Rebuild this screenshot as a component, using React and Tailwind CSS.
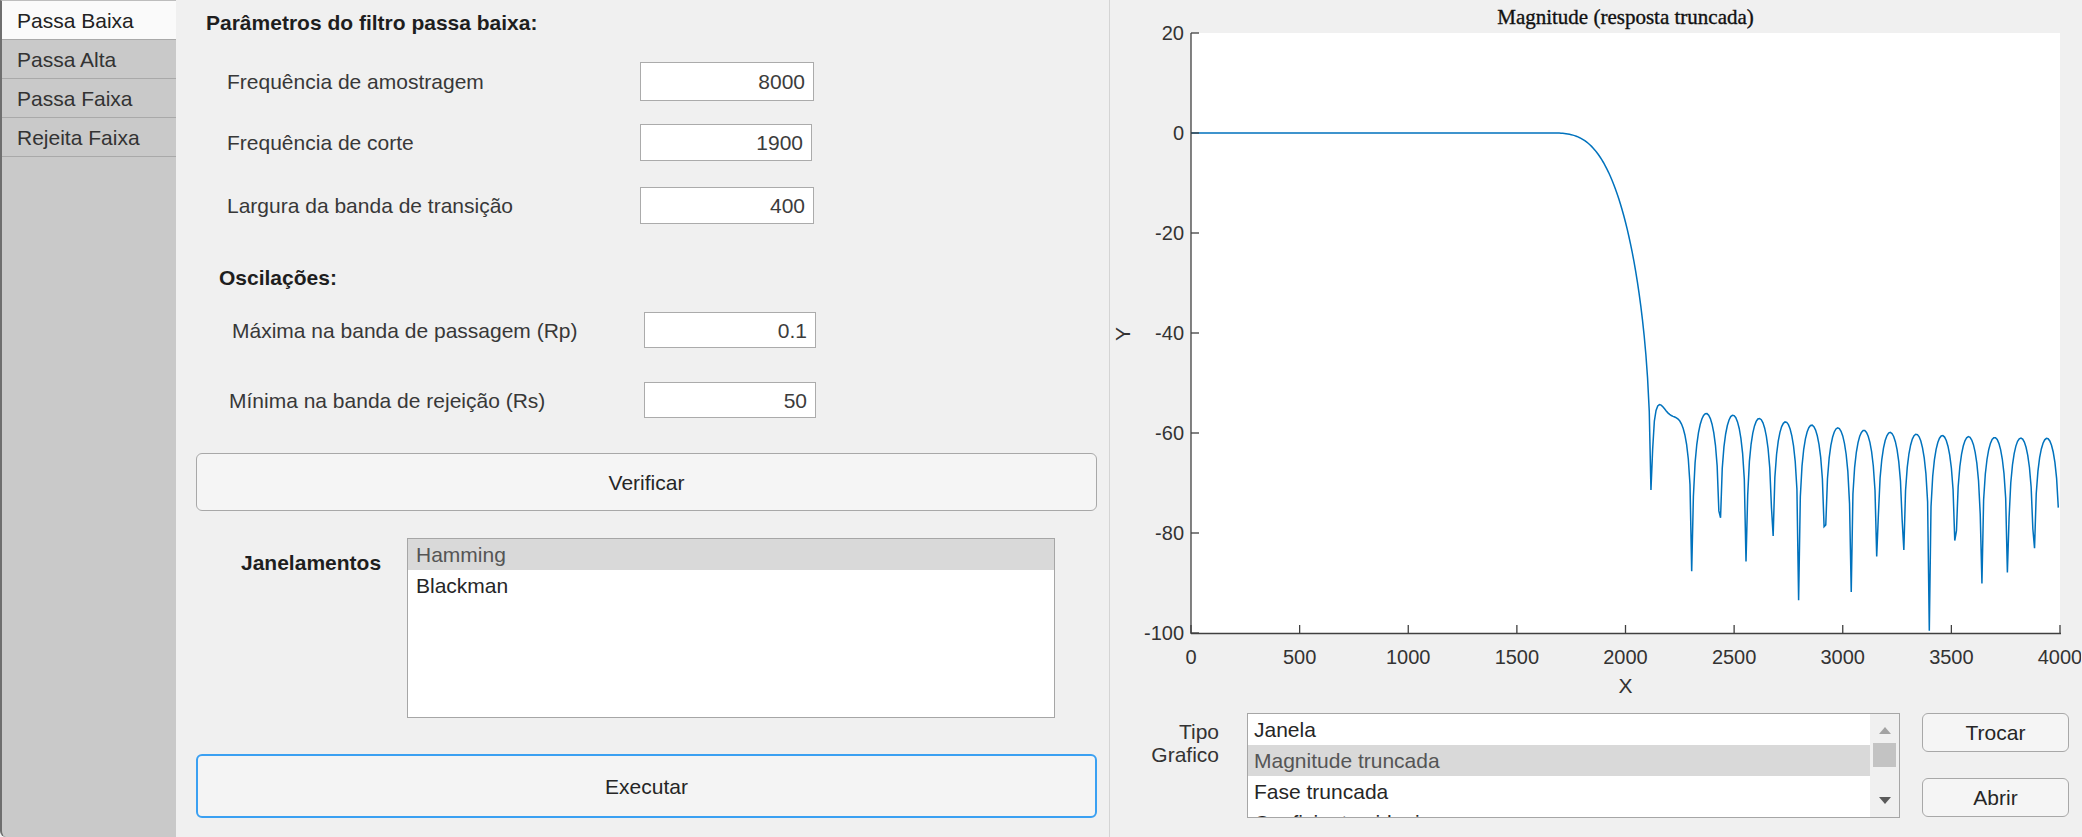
import React, { useMemo } from 'react';

// FIR passa baixa (janela de Hamming) para o gráfico de magnitude
function magnitudeResponse() {
  const fs = 8000;
  const fc = 1900;
  const N = 66;
  const M = N - 1;
  const wc = (2 * Math.PI * fc) / fs;
  const h = [];
  for (let n = 0; n < N; n++) {
    const k = n - M / 2;
    const ideal = k === 0 ? wc / Math.PI : Math.sin(wc * k) / (Math.PI * k);
    const w = 0.54 - 0.46 * Math.cos((2 * Math.PI * n) / M);
    h.push(ideal * w);
  }
  const pts = [];
  for (let i = 0; i < 512; i++) {
    const f = (i * fs) / 1024;
    const om = (2 * Math.PI * f) / fs;
    let re = 0;
    let im = 0;
    for (let n = 0; n < N; n++) {
      re += h[n] * Math.cos(om * n);
      im -= h[n] * Math.sin(om * n);
    }
    pts.push([f, 20 * Math.log10(Math.sqrt(re * re + im * im) + 1e-12)]);
  }
  return pts;
}

const AX = { left: 81, right: 950, top: 33, bottom: 633 };
const xPos = (f) => AX.left + (f / 4000) * (AX.right - AX.left);
const yPos = (db) => AX.top + (20 - db) * 5;

const MagnitudePlot = () => {
  const path = useMemo(() => {
    const pts = magnitudeResponse();
    return pts
      .map(([f, db], i) => `${i === 0 ? 'M' : 'L'}${xPos(f).toFixed(2)},${yPos(Math.max(db, -140)).toFixed(2)}`)
      .join(' ');
  }, []);

  const xTicks = [0, 500, 1000, 1500, 2000, 2500, 3000, 3500, 4000];
  const yTicks = [20, 0, -20, -40, -60, -80, -100];

  return (
    <svg width="971" height="700" className="block">
      <defs>
        <clipPath id="plotClip">
          <rect x={AX.left} y={AX.top} width={AX.right - AX.left} height={AX.bottom - AX.top} />
        </clipPath>
      </defs>
      <text
        x={(AX.left + AX.right) / 2}
        y="24"
        textAnchor="middle"
        fontFamily="'Liberation Serif', 'Times New Roman', serif"
        fontSize="21"
        fill="#111111"
        stroke="#111111"
        strokeWidth="0.35"
      >
        Magnitude (resposta truncada)
      </text>
      <rect x={AX.left} y={AX.top} width={AX.right - AX.left} height={AX.bottom - AX.top + 1} fill="#ffffff" />
      <path d={path} fill="none" stroke="#0072bd" strokeWidth="1.5" clipPath="url(#plotClip)" />
      <g stroke="#404040" strokeWidth="1.3" fill="none">
        <line x1={AX.left} y1={AX.top} x2={AX.left} y2={AX.bottom + 1} />
        <line x1={AX.left} y1={AX.bottom + 0.5} x2={AX.right + 1} y2={AX.bottom + 0.5} />
        {xTicks.map((t) => (
          <line key={t} x1={xPos(t)} y1={AX.bottom} x2={xPos(t)} y2={AX.bottom - 8} />
        ))}
        {yTicks.map((t) => (
          <line key={t} x1={AX.left} y1={yPos(t)} x2={AX.left + 8} y2={yPos(t)} />
        ))}
      </g>
      <g fontFamily="'Liberation Sans', Arial, sans-serif" fontSize="20" fill="#333333">
        {xTicks.map((t) => (
          <text key={t} x={xPos(t)} y="664" textAnchor="middle">
            {t}
          </text>
        ))}
        {yTicks.map((t) => (
          <text key={t} x="74" y={yPos(t) + 7} textAnchor="end">
            {t}
          </text>
        ))}
        <text x={(AX.left + AX.right) / 2} y="693" textAnchor="middle" fontSize="21">
          X
        </text>
        <text transform="translate(20,334) rotate(-90)" textAnchor="middle" fontSize="21">
          Y
        </text>
      </g>
    </svg>
  );
};

const ParamRow = ({ label, value, labelWidth, labelPad, inputWidth, height, top }) => (
  <div className={`flex items-center ${top}`} style={{ height }}>
    <div className="text-[#383838] whitespace-nowrap" style={{ width: labelWidth, paddingLeft: labelPad }}>
      {label}
    </div>
    <div
      className="h-full bg-white border border-[#ababab] flex items-center justify-end pr-[8px] text-[#3c3c3c]"
      style={{ width: inputWidth }}
    >
      {value}
    </div>
  </div>
);

const tabs = ['Passa Baixa', 'Passa Alta', 'Passa Faixa', 'Rejeita Faixa'];

export default function App() {
  return (
    <div className="w-[2082px] h-[837px] flex overflow-hidden bg-[#f0f0f0] font-['Liberation_Sans',Arial,sans-serif] text-[21px] leading-none">
      {/* abas */}
      <div className="w-[176px] shrink-0 bg-[#c9c9c9] border-l-2 border-[#6e6e6e] border-t border-t-[#bdbdbd] rounded-bl-[6px] flex flex-col">
        {tabs.map((t, i) => (
          <div
            key={t}
            className={`h-[39px] flex items-center pl-[15px] border-b border-[#a9a9a9] ${
              i === 0 ? 'bg-[#fafafa] text-[#222222]' : 'text-[#333333]'
            }`}
          >
            {t}
          </div>
        ))}
      </div>

      {/* parâmetros */}
      <div className="w-[934px] shrink-0 border-r border-[#d4d4d4] flex flex-col">
        <div className="h-[44px] flex items-center pl-[30px] font-bold text-[#1e1e1e]">
          Parâmetros do filtro passa baixa:
        </div>
        <ParamRow label="Frequência de amostragem" value="8000" labelWidth={464} labelPad={51} inputWidth={174} height={39} top="mt-[18px]" />
        <ParamRow label="Frequência de corte" value="1900" labelWidth={464} labelPad={51} inputWidth={172} height={37} top="mt-[23px]" />
        <ParamRow label="Largura da banda de transição" value="400" labelWidth={464} labelPad={51} inputWidth={174} height={37} top="mt-[26px]" />

        <div className="mt-[33px] h-[40px] flex items-center pl-[43px] font-bold text-[#1e1e1e]">Oscilações:</div>
        <ParamRow label="Máxima na banda de passagem (Rp)" value="0.1" labelWidth={468} labelPad={56} inputWidth={172} height={36} top="mt-[15px]" />
        <ParamRow label="Mínima na banda de rejeição (Rs)" value="50" labelWidth={468} labelPad={53} inputWidth={172} height={36} top="mt-[34px]" />

        <button className="mt-[35px] ml-[20px] w-[901px] h-[58px] rounded-[6px] border border-[#a8a8a8] bg-[#f5f5f5] text-[#262626]">
          Verificar
        </button>

        <div className="mt-[27px] flex">
          <div className="w-[231px] pl-[65px] pt-[14px] font-bold text-[#1e1e1e]">Janelamentos</div>
          <div className="w-[648px] h-[180px] bg-white border border-[#a6a6a6] flex flex-col">
            <div className="h-[31px] flex items-center pl-[8px] bg-[#d9d9d9] text-[#555555]">Hamming</div>
            <div className="h-[31px] flex items-center pl-[8px] text-[#262626]">Blackman</div>
          </div>
        </div>

        <button className="mt-[36px] ml-[20px] w-[901px] h-[64px] rounded-[6px] border-2 border-[#3aa0f2] bg-[#f4f4f4] text-[#262626]">
          Executar
        </button>
      </div>

      {/* gráfico */}
      <div className="flex-1 flex flex-col">
        <MagnitudePlot />
        <div className="mt-[13px] flex items-start">
          <div className="w-[109px] pt-[7px] text-right leading-[23px] text-[#333333]">
            Tipo
            <br />
            Grafico
          </div>
          <div className="ml-[28px] w-[653px] h-[105px] bg-white border border-[#a6a6a6] flex overflow-hidden">
            <div className="flex-1 flex flex-col">
              <div className="h-[31px] shrink-0 flex items-center pl-[6px] text-[#262626]">Janela</div>
              <div className="h-[31px] shrink-0 flex items-center pl-[6px] bg-[#d9d9d9] text-[#555555]">Magnitude truncada</div>
              <div className="h-[31px] shrink-0 flex items-center pl-[6px] text-[#262626]">Fase truncada</div>
              <div className="h-[31px] shrink-0 flex items-center pl-[6px] text-[#262626]">Coeficientes ideais</div>
            </div>
            <div className="w-[29px] bg-[#f0f0f0] flex flex-col items-center">
              <div className="mt-[13px] w-0 h-0 border-l-[6px] border-r-[6px] border-b-[7px] border-l-transparent border-r-transparent border-b-[#a3a3a3]" />
              <div className="mt-[9px] w-[23px] h-[24px] bg-[#c3c3c3]" />
              <div className="mt-[30px] w-0 h-0 border-l-[6px] border-r-[6px] border-t-[7px] border-l-transparent border-r-transparent border-t-[#5a5a5a]" />
            </div>
          </div>
          <div className="ml-[22px] w-[147px] flex flex-col">
            <button className="h-[39px] rounded-[6px] border border-[#a8a8a8] bg-[#f5f5f5] text-[#262626]">Trocar</button>
            <button className="mt-[26px] h-[39px] rounded-[6px] border border-[#a8a8a8] bg-[#f5f5f5] text-[#262626]">Abrir</button>
          </div>
        </div>
      </div>
    </div>
  );
}
